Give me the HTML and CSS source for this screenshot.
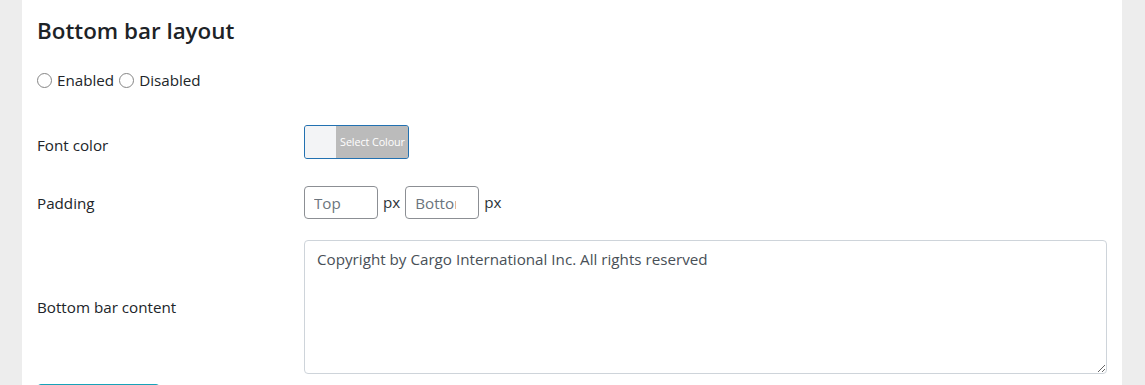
FILE: index.html
```html
<!DOCTYPE html>
<html lang="en">
<head>
<meta charset="utf-8">
<title>Bottom bar layout</title>
<link rel="stylesheet" href="styles.css">
</head>
<body>
<div class="panel">
  <h4 class="title">Bottom bar layout</h4>
  <div class="radios">
    <label class="radio"><input type="radio" name="bb"> Enabled</label>
    <label class="radio"><input type="radio" name="bb"> Disabled</label>
  </div>
  <div class="form">
    <div class="row row-color">
      <div class="label">Font color</div>
      <div class="field">
        <button type="button" class="color-btn"><span class="swatch"></span><span class="color-text">Select Colour</span></button>
      </div>
    </div>
    <div class="row row-padding">
      <div class="label">Padding</div>
      <div class="field">
        <input class="num" type="text" placeholder="Top"><span class="unit">px</span><input class="num" type="text" placeholder="Bottom"><span class="unit">px</span>
      </div>
    </div>
    <div class="row row-content">
      <div class="label">Bottom bar content</div>
      <div class="field">
        <textarea class="area" rows="5">Copyright by Cargo International Inc. All rights reserved</textarea>
      </div>
    </div>
  </div>
  <button type="button" class="btn-save">Save Changes</button>
</div>
</body>
</html>
```
FILE: styles.css
```css
html, body {
  margin: 0;
  padding: 0;
  background: #ededed;
  height: 100%;
  overflow: hidden;
}
body {
  font-family: "Open Sans", "Noto Sans", sans-serif;
  font-size: 15.2px;
  line-height: 1.5;
  color: #212529;
}
.panel {
  background: #fff;
  margin: 0 23px 0 22px;
  padding: 17px 15px 20px 15px;
  min-height: 400px;
}
.title {
  margin: 0;
  font-size: 22.4px;
  font-weight: 600;
  line-height: 27px;
  color: #1d2327;
}
.radios {
  display: flex;
  align-items: center;
  gap: 5px;
  margin-top: 26px;
  height: 20px;
}
.radio {
  display: flex;
  align-items: center;
  gap: 5px;
  line-height: 20px;
}
.radio input {
  appearance: none;
  -webkit-appearance: none;
  margin: 0;
  width: 15px;
  height: 15px;
  border: 1px solid #858585;
  border-radius: 50%;
  background: #fff;
  box-sizing: border-box;
}
.form {
  display: flex;
  flex-direction: column;
  margin-top: 35px;
}
.row {
  display: grid;
  grid-template-columns: 267px 1fr;
  align-items: center;
}
.row-padding { margin-top: 27px; }
.row-content { margin-top: 21px; }
.label {
  line-height: 20px;
}
.row-color .label {
  padding-top: 6px;
}
.field {
  display: flex;
  align-items: center;
}
.color-btn {
  display: flex;
  align-items: stretch;
  height: 34px;
  width: 105px;
  padding: 0;
  border: 1px solid #2271b1;
  border-radius: 3px;
  background: #bbb;
  overflow: hidden;
  box-sizing: border-box;
  cursor: pointer;
  font-family: "Open Sans", sans-serif;
}
.swatch {
  width: 31px;
  background: #f3f4f6;
  border-right: 1px solid #bbb;
  flex: none;
}
.color-text {
  flex: 1;
  display: flex;
  align-items: center;
  justify-content: center;
  background: #bbb;
  color: #fff;
  font-size: 10.8px;
  letter-spacing: -0.1px;
  white-space: nowrap;
  padding-bottom: 1px;
}
.num {
  width: 74px;
  height: 33px;
  box-sizing: border-box;
  padding: 0 22px 0 9px;
  border: 1px solid #8c8f94;
  border-radius: 4px;
  font-family: "Open Sans", sans-serif;
  font-size: 15.2px;
  color: #2c3338;
  background: #fff;
  margin: 0;
}
.num::placeholder { color: #6c757d; }
.unit {
  margin: 0 5px 0 5px;
  color: #2c3338;
}
.area {
  display: block;
  width: 100%;
  height: 134px;
  box-sizing: border-box;
  margin: 0;
  padding: 6px 12px;
  border: 1px solid #ced4da;
  border-radius: 4px;
  font-family: "Open Sans", sans-serif;
  font-size: 15.2px;
  line-height: 24px;
  color: #495057;
  background: #fff;
  resize: both;
}
.btn-save {
  display: block;
  margin-top: 10px;
  width: 123px;
  padding: 6px 12px;
  border: 1px solid #17a2b8;
  border-radius: 4px;
  background: #17a2b8;
  color: #fff;
  font-family: "Open Sans", sans-serif;
  font-size: 15.2px;
  line-height: 24px;
}
```
